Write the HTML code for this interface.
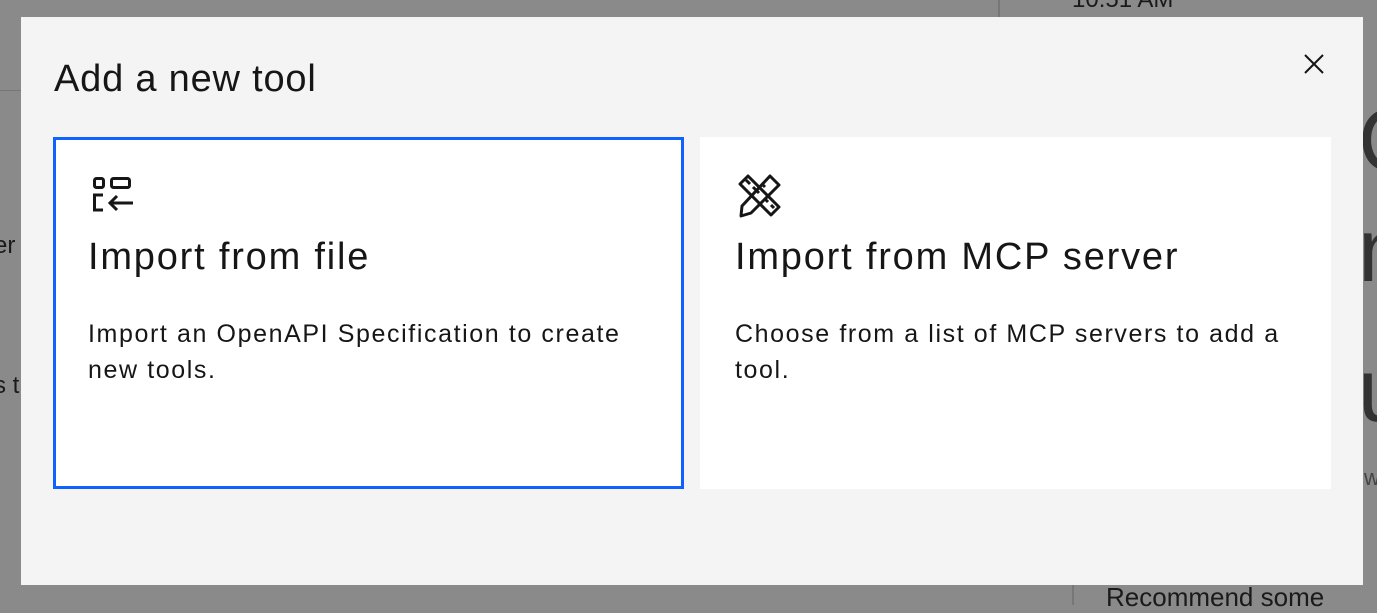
<!DOCTYPE html>
<html><head><style>
*{margin:0;padding:0;box-sizing:border-box}
body{width:1377px;height:605px;background:#8a8a8a;font-family:"Liberation Sans",sans-serif;position:relative;overflow:hidden;color:#161616}
.bg{position:absolute;color:#1a1a1a;white-space:nowrap}
.modal{position:absolute;left:21px;top:17px;width:1342px;height:568px;background:#f4f4f4}
h1{position:absolute;left:33px;top:41px;font-size:38px;font-weight:400;letter-spacing:0.8px}
.close{position:absolute;left:1283px;top:37px}
.card{position:absolute;top:120px;width:631px;height:352px;background:#fff}
.c1{left:32px;border:3px solid #0f62fe}
.c2{left:679px}
.card svg{position:absolute}
.card h2{position:absolute;font-size:38px;font-weight:400;top:96px;white-space:nowrap;letter-spacing:1.8px}
.card p{position:absolute;font-size:25px;line-height:36px;top:176px;width:580px;letter-spacing:1.6px}
</style></head><body>
<div class="bg" style="left:1072px;top:-14px;font-size:24px">10:51 AM</div>
<div style="position:absolute;left:998px;top:0;width:2px;height:20px;background:#777"></div>
<div style="position:absolute;left:0;top:90px;width:21px;height:1px;background:#777"></div>
<div class="bg" style="left:-6px;top:232px;font-size:24px">er</div>
<div class="bg" style="left:-6px;top:372px;font-size:24px">s t</div>
<div class="bg" style="left:1358px;top:90px;font-size:90px;color:#333">C</div>
<div class="bg" style="left:1358px;top:200px;font-size:90px;color:#333">n</div>
<div class="bg" style="left:1358px;top:340px;font-size:90px;color:#333">u</div>
<div class="bg" style="left:1364px;top:465px;font-size:22px;color:#444">w</div>
<div style="position:absolute;left:1072px;top:585px;width:2px;height:20px;background:#777"></div>
<div class="bg" style="left:1106px;top:582px;font-size:26px">Recommend some</div>
<div class="modal">
<h1>Add a new tool</h1>
<svg class="close" width="20" height="20" viewBox="0 0 20 20"><path d="M1 1L19 19M19 1L1 19" stroke="#161616" stroke-width="2"/></svg>
<div class="card c1">
<svg style="left:37px;top:37px" width="42" height="36" viewBox="0 0 42 36"><g fill="none" stroke="#161616" stroke-width="3"><rect x="1.5" y="1.5" width="9" height="9" rx="2"/><rect x="18.5" y="1.5" width="18" height="9" rx="2"/><path d="M10 18H1.5V33H10"/><path d="M40 26H17M24 19L17 26L24 33"/></g></svg>
<h2 style="left:32px">Import from file</h2>
<p style="left:32px">Import an OpenAPI Specification to create new tools.</p>
</div>
<div class="card c2">
<svg style="left:36px;top:36px" width="46" height="46" viewBox="0 0 46 46"><g fill="none" stroke="#161616" stroke-width="3" stroke-linejoin="round"><path d="M12 3L43 34L35 42L4 11Z"/><path d="M34 3L43 12L15 40L5 43L6 33Z"/><path d="M10 7L14 11M17 14L20 17M29 26L32 29M35 32L38 35M26 11L29 14M20 17L23 20"/></g></svg>
<h2 style="left:35px;top:99px">Import from MCP server</h2>
<p style="left:35px;top:179px">Choose from a list of MCP servers to add a tool.</p>
</div>
</div>
</body></html>
